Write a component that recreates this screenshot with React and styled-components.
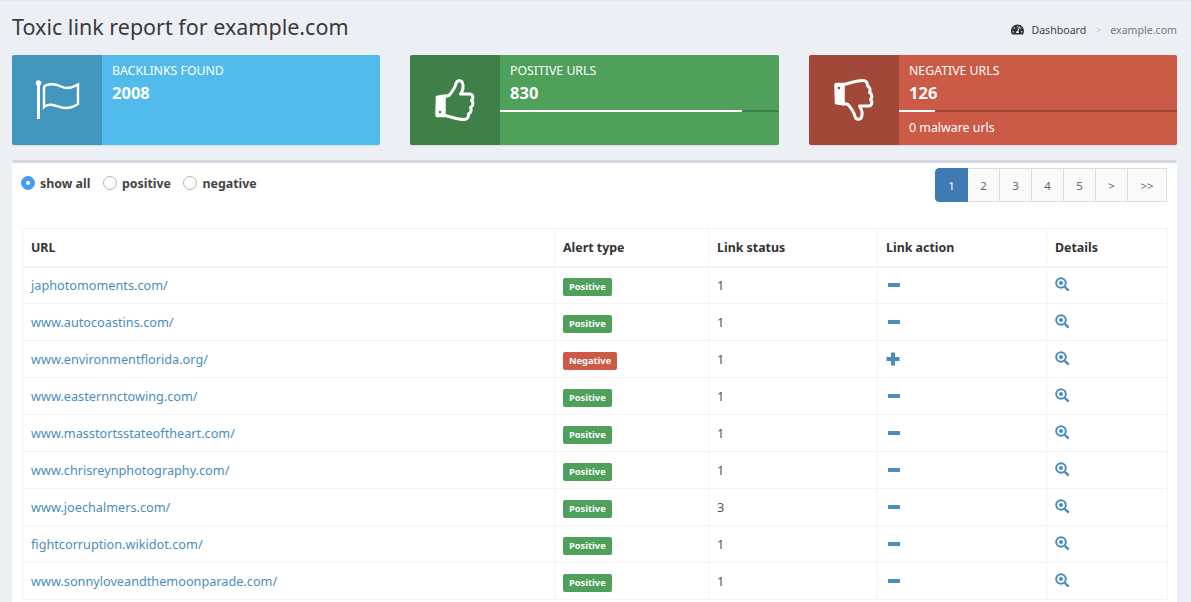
import React from 'react';
import styled, { createGlobalStyle } from 'styled-components';
import { FaTachometerAlt } from 'react-icons/fa';

const GlobalStyle = createGlobalStyle`
  html, body {
    margin: 0;
    height: 100%;
    overflow: hidden;
    background: #ecf0f5;
  }
  body {
    font-family: "Noto Sans", "Open Sans", sans-serif;
    font-size: 13px;
    color: #333;
  }
  * {
    box-sizing: border-box;
  }
`;

const Page = styled.div`
  height: 602px;
  padding: 15px 14px 0 12px;
  display: flex;
  flex-direction: column;
  border-top: 1px solid #e6e9ee;
`;

const Header = styled.div`
  display: flex;
  justify-content: space-between;
  align-items: center;
  height: 26px;
  margin-bottom: 13px;
`;

const Title = styled.h1`
  margin: 0 0 5px;
  font-size: 21.500px;
  font-weight: 400;
  color: #3a3a3a;
`;

const Breadcrumb = styled.div`
  display: flex;
  align-items: center;
  font-size: 10.600px;
  color: #444;
  padding-top: 1px;
`;

const CrumbIcon = styled(FaTachometerAlt)`
  font-size: 13px;
  margin-right: 7px;
  color: #333;
`;

const CrumbSep = styled.span`
  color: #ccc;
  margin: 0 9px;
`;

const CrumbLast = styled.span`
  color: #777;
`;

const Boxes = styled.div`
  display: grid;
  grid-template-columns: 368px 369px 368px;
  justify-content: space-between;
  margin-bottom: 15px;
`;

const Box = styled.div`
  display: flex;
  height: 90px;
  border-radius: 2px;
  overflow: hidden;
  background: ${props => props.color};
  color: #fff;
  box-shadow: 0 1px 1px rgba(0, 0, 0, 0.08);
`;

const BoxIcon = styled.div`
  flex: 0 0 90px;
  display: flex;
  align-items: center;
  justify-content: center;
  background: rgba(0, 0, 0, 0.2);
  svg {
    display: block;
  }
`;

const BoxContent = styled.div`
  flex: 1;
  padding: 8px 10px 0;
  min-width: 0;
`;

const BoxLabel = styled.div`
  font-size: 12.300px;
  line-height: 16px;
  text-transform: uppercase;
`;

const BoxNumber = styled.div`
  font-size: 16.500px;
  font-weight: 700;
  line-height: 20px;
  margin-top: 4px;
`;

const Progress = styled.div`
  height: 2px;
  margin: 7px -10px 6px;
  background: rgba(0, 0, 0, 0.2);
`;

const ProgressFill = styled.div`
  height: 100%;
  background: #fff;
`;

const BoxNote = styled.div`
  font-size: 12.400px;
  line-height: 20px;
`;

const Panel = styled.div`
  flex: 1;
  min-height: 0;
  background: #fff;
  border-top: 3px solid #d2d6de;
  border-radius: 3px 3px 0 0;
  padding: 5px 10px 0 10px;
`;

const Toolbar = styled.div`
  display: flex;
  justify-content: space-between;
  align-items: flex-start;
  height: 60px;
`;

const Filters = styled.div`
  display: flex;
  align-items: center;
  gap: 12.500px;
  margin-left: -1px;
  height: 30px;
`;

const Filter = styled.label`
  display: flex;
  align-items: center;
  gap: 5px;
  font-size: 12.400px;
  font-weight: 700;
  color: #444;
`;

const Radio = styled.span`
  display: flex;
  align-items: center;
  justify-content: center;
  width: 14px;
  height: 14px;
  border-radius: 50%;
  border: 1px solid ${props => (props.checked ? '#4a9bf5' : '#b5b5b5')};
  background: ${props => (props.checked ? '#4a9bf5' : '#fff')};
  &::after {
    content: '';
    display: ${props => (props.checked ? 'block' : 'none')};
    width: 4px;
    height: 4px;
    border-radius: 50%;
    background: #fff;
  }
`;

const Pagination = styled.div`
  display: flex;
  height: 34px;
`;

const PageButton = styled.div`
  position: relative;
  z-index: ${props => (props.active ? 1 : 0)};
  display: flex;
  align-items: center;
  justify-content: center;
  width: ${props => props.width}px;
  font-size: 11.500px;
  margin-left: ${props => (props.active ? 0 : -1)}px;
  color: ${props => (props.active ? '#fff' : '#666')};
  background: ${props => (props.active ? '#3f7ab3' : '#fafafa')};
  border: 1px solid ${props => (props.active ? '#3f7ab3' : '#ddd')};
  border-radius: ${props => (props.active ? '4px 0 0 4px' : '0')};
`;

const Table = styled.table`
  width: 1145px;
  border-collapse: collapse;
  table-layout: fixed;
  font-size: 12.700px;
`;

const Th = styled.th`
  width: ${props => props.width}px;
  height: 38px;
  padding: 0 8px;
  text-align: left;
  font-size: 12.400px;
  font-weight: 700;
  color: #333;
  border: 1px solid #f4f4f4;
  border-bottom-width: 2px;
`;

const Td = styled.td`
  height: 37px;
  padding: 0 8px;
  color: #555;
  border: 1px solid #f4f4f4;
`;

const UrlLink = styled.a`
  color: #4a8dbd;
  text-decoration: none;
`;

const Badge = styled.span`
  display: inline-block;
  padding: 0 6px;
  height: 18px;
  line-height: 18px;
  font-size: 9.300px;
  font-weight: 700;
  margin-top: 3px;
  color: #fff;
  border-radius: 2px;
  vertical-align: middle;
  background: ${props => (props.negative ? '#cb5a47' : '#4ea05a')};
`;

const ActionIcon = styled.svg`
  display: block;
  margin-left: ${props => props.offset || 0}px;
  margin-top: -1px;
  color: #4a8dbd;
`;

const rows = [
  ['japhotomoments.com/', false, 1],
  ['www.autocoastins.com/', false, 1],
  ['www.environmentflorida.org/', true, 1],
  ['www.easternnctowing.com/', false, 1],
  ['www.masstortsstateoftheart.com/', false, 1],
  ['www.chrisreynphotography.com/', false, 1],
  ['www.joechalmers.com/', false, 3],
  ['fightcorruption.wikidot.com/', false, 1],
  ['www.sonnyloveandthemoonparade.com/', false, 1],
];

const FlagIcon = () => (
  <svg width="45" height="40" viewBox="0 0 45 40" fill="none" stroke="#fff" strokeWidth="2.400">
    <circle cx="3.500" cy="3" r="2.800" fill="#fff" stroke="none" />
    <path d="M3.500 3V39" strokeWidth="3" />
    <path d="M9 7C12 3.500 20 3.500 26 6.500C31 9 37 8 43 4.500V24C37 28 31 29 25 27C19 25 13 23 9 27Z" />
  </svg>
);

const THUMB_HAND =
  'M10 17.500L14 16.500C17 13 20 9 21 4.500C22 1 26.500 1 27.500 4C29 8 27.500 12 25.500 15L34.500 15C38.500 15 38.500 20 36.500 21.500C38.800 23.500 38 27.500 35.500 28.500C36.800 30.500 36 34 33.500 35C33.800 38.500 32 40.500 29 40.500C22 40.500 17 38 10 36.500';

const ThumbUp = () => (
  <svg width="40" height="42" viewBox="0 0 40 42" fill="none" stroke="#fff" strokeWidth="3" strokeLinecap="round" strokeLinejoin="round">
    <path d="M1.500 17.500L10 16V37.500L2.500 37.500C1.500 37.500 1 37 1 36Z" fill="#fff" strokeWidth="1.500" />
    <circle cx="5" cy="33" r="1.300" fill="#3d7d48" stroke="none" />
    <path d={THUMB_HAND} />
  </svg>
);

const ThumbDown = () => (
  <svg width="40" height="42" viewBox="0 0 40 42" fill="none" stroke="#fff" strokeWidth="3" strokeLinecap="round" strokeLinejoin="round">
    <g transform="matrix(1 0 0 -1 0 42)">
      <path d="M1.500 17.500L10 16V37.500L2.500 37.500C1.500 37.500 1 37 1 36Z" fill="#fff" strokeWidth="1.500" />
      <circle cx="5" cy="33" r="1.300" fill="#a24536" stroke="none" />
      <path d={THUMB_HAND} />
    </g>
  </svg>
);

const Minus = () => (
  <ActionIcon width="12" height="12" viewBox="0 0 12 12" offset={2}>
    <rect x="0" y="4" width="12" height="4" rx="0.500" fill="currentColor" />
  </ActionIcon>
);

const Plus = () => (
  <ActionIcon width="14" height="14" viewBox="0 0 14 14">
    <path d="M5 0.500H9V5H13.500V9H9V13.500H5V9H0.500V5H5Z" fill="currentColor" />
  </ActionIcon>
);

const Zoom = () => (
  <ActionIcon width="15" height="15" viewBox="0 0 15 15" fill="none">
    <circle cx="6" cy="6" r="4.800" stroke="currentColor" strokeWidth="2" />
    <circle cx="6" cy="6" r="2" fill="currentColor" />
    <path d="M9.800 9.800L13.700 13.700" stroke="currentColor" strokeWidth="2.400" />
  </ActionIcon>
);

export default function App() {
  return (
    <Page>
      <GlobalStyle />
      <Header>
        <Title>Toxic link report for example.com</Title>
        <Breadcrumb>
          <CrumbIcon />
          Dashboard
          <CrumbSep>&gt;</CrumbSep>
          <CrumbLast>example.com</CrumbLast>
        </Breadcrumb>
      </Header>
      <Boxes>
        <Box color="#51bcec">
          <BoxIcon><FlagIcon /></BoxIcon>
          <BoxContent>
            <BoxLabel>Backlinks found</BoxLabel>
            <BoxNumber>2008</BoxNumber>
          </BoxContent>
        </Box>
        <Box color="#4ea05a">
          <BoxIcon><ThumbUp /></BoxIcon>
          <BoxContent>
            <BoxLabel>Positive urls</BoxLabel>
            <BoxNumber>830</BoxNumber>
            <Progress><ProgressFill style={{ width: '86.7%' }} /></Progress>
          </BoxContent>
        </Box>
        <Box color="#cb5a47">
          <BoxIcon><ThumbDown /></BoxIcon>
          <BoxContent>
            <BoxLabel>Negative urls</BoxLabel>
            <BoxNumber>126</BoxNumber>
            <Progress><ProgressFill style={{ width: '13%' }} /></Progress>
            <BoxNote>0 malware urls</BoxNote>
          </BoxContent>
        </Box>
      </Boxes>
      <Panel>
        <Toolbar>
          <Filters>
            <Filter><Radio checked />show all</Filter>
            <Filter><Radio />positive</Filter>
            <Filter><Radio />negative</Filter>
          </Filters>
          <Pagination>
            <PageButton active width={33}>1</PageButton>
            <PageButton width={33}>2</PageButton>
            <PageButton width={33}>3</PageButton>
            <PageButton width={33}>4</PageButton>
            <PageButton width={33}>5</PageButton>
            <PageButton width={33}>&gt;</PageButton>
            <PageButton width={40}>&gt;&gt;</PageButton>
          </Pagination>
        </Toolbar>
        <Table>
          <thead>
            <tr>
              <Th width={532}>URL</Th>
              <Th width={154}>Alert type</Th>
              <Th width={169}>Link status</Th>
              <Th width={169}>Link action</Th>
              <Th width={121}>Details</Th>
            </tr>
          </thead>
          <tbody>
            {rows.map(([url, negative, status]) => (
              <tr key={url}>
                <Td><UrlLink href="#">{url}</UrlLink></Td>
                <Td><Badge negative={negative}>{negative ? 'Negative' : 'Positive'}</Badge></Td>
                <Td>{status}</Td>
                <Td>{negative ? <Plus /> : <Minus />}</Td>
                <Td><Zoom /></Td>
              </tr>
            ))}
          </tbody>
        </Table>
      </Panel>
    </Page>
  );
}
